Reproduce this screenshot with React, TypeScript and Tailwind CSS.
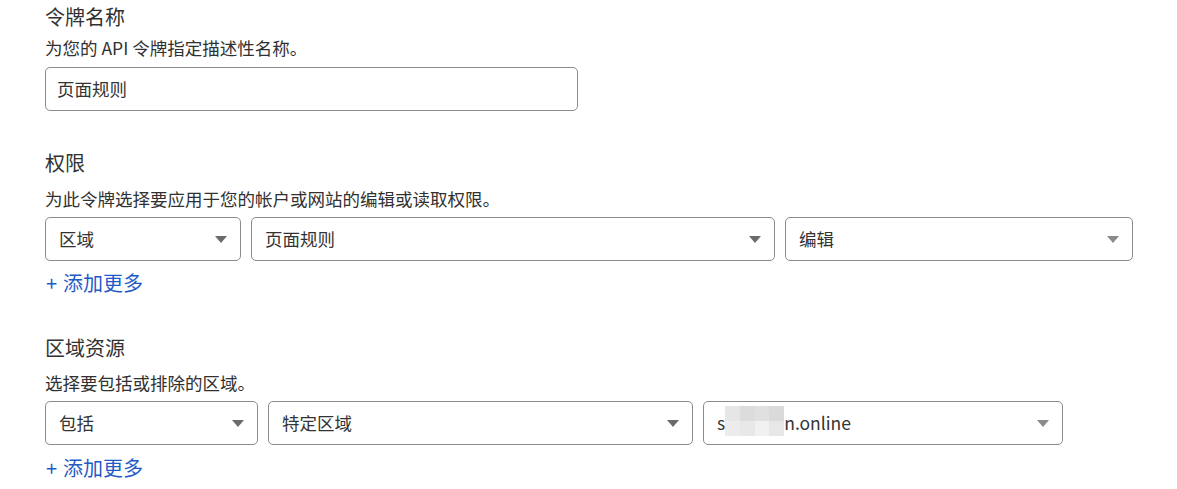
import React from 'react';

const font = { fontFamily: '"Noto Sans CJK SC", "Noto Sans", sans-serif' };

const Caret: React.FC<{ light?: boolean }> = ({ light }) => (
  <svg width="12" height="7" viewBox="0 0 12 7" className="shrink-0">
    <path d="M0 0 L12 0 L6 7 Z" fill={light ? '#8a8a8a' : '#6b6b6b'} />
  </svg>
);

const Select: React.FC<{ width: string; children: React.ReactNode; light?: boolean }> = ({ width, children, light }) => (
  <div className={`${width} shrink-0 h-[44px] flex items-center justify-between pl-[13px] pr-[13px] border border-[#8c8c8c] rounded-[5px] bg-white`}>
    <span className="text-[17.5px] text-[#333] leading-none">{children}</span>
    <Caret light={light} />
  </div>
);

const AddMore: React.FC<{ className?: string }> = ({ className = 'mt-[8px]' }) => (
  <div className={`${className} flex items-center text-[20px] leading-[28px] text-[#1f5bc6]`}>
    <span className="ml-[1px] mr-[6px]">+</span>
    <span>添加更多</span>
  </div>
);

const Blur: React.FC = () => (
  <span className="inline-grid grid-cols-4 w-[59px] h-[30px] align-middle -mt-[4px]">
    <span className="bg-[#e6e6e6]" />
    <span className="bg-[#dcdcdc]" />
    <span className="bg-[#e0e0e0]" />
    <span className="bg-[#dadada]" />
    <span className="bg-[#ececec]" />
    <span className="bg-[#e8e8e8]" />
    <span className="bg-[#f1f1f1]" />
    <span className="bg-[#e7e7e7]" />
  </span>
);

export default function App() {
  return (
    <div className="w-[1177px] h-[489px] bg-white pl-[45px] pt-[2px] overflow-hidden" style={font}>
      {/* 令牌名称 */}
      <h2 className="text-[20px] leading-[29px] text-[#313131]">令牌名称</h2>
      <p className="mt-[5px] text-[17.5px] leading-[24px] text-[#313131]">为您的 API 令牌指定描述性名称。</p>
      <div className="mt-[7px] w-[533px] h-[44px] flex items-center px-[11px] border border-[#8c8c8c] rounded-[5px]">
        <span className="text-[17.5px] text-[#333] leading-none">页面规则</span>
      </div>

      {/* 权限 */}
      <h2 className="mt-[37px] text-[20px] leading-[29px] text-[#313131]">权限</h2>
      <p className="mt-[10px] text-[17.5px] leading-[24px] text-[#313131]">为此令牌选择要应用于您的帐户或网站的编辑或读取权限。</p>
      <div className="mt-[6px] flex gap-[10px]">
        <Select width="w-[196px]">区域</Select>
        <Select width="w-[524px]">页面规则</Select>
        <Select width="w-[348px]" light>编辑</Select>
      </div>
      <AddMore />

      {/* 区域资源 */}
      <h2 className="mt-[36px] text-[20px] leading-[29px] text-[#313131]">区域资源</h2>
      <p className="mt-[9px] text-[17.5px] leading-[24px] text-[#313131]">选择要包括或排除的区域。</p>
      <div className="mt-[6px] flex gap-[10px]">
        <Select width="w-[213px]">包括</Select>
        <Select width="w-[425px]">特定区域</Select>
        <Select width="w-[360px]" light>
          <span className="inline-flex items-center">
            s<Blur />n.online
          </span>
        </Select>
      </div>
      <AddMore className="mt-[9px]" />
    </div>
  );
}
